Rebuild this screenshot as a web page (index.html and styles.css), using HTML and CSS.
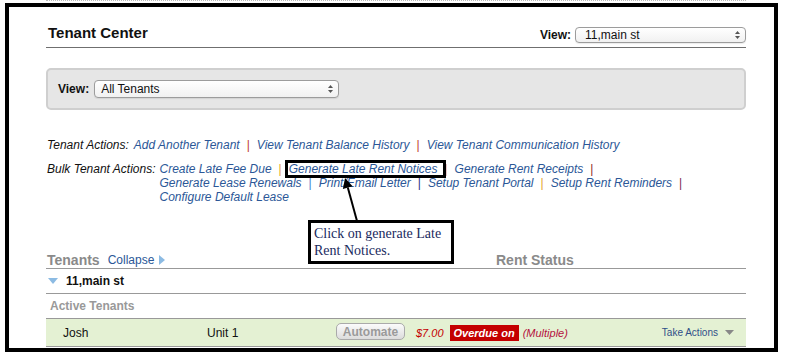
FILE: index.html
```html
<!DOCTYPE html>
<html lang="en">
  <head>
    <meta charset="UTF-8" />
    <title>Tenant Center</title>
    <link rel="stylesheet" href="styles.css">
  </head>
  <body>
    <div class="page">
      <div class="header">
        <h2>Tenant Center</h2>
        <div class="view">
          <label>View:</label>
          <div class="select top-select">
            <select><option>11,main st</option></select>
            <svg width="5" height="8" viewBox="0 0 5 8"><polygon points="0,3 2.5,0 5,3" fill="#555"/><polygon points="0,5 2.5,8 5,5" fill="#555"/></svg>
          </div>
        </div>
      </div>

      <div class="filter">
        <label>View:</label>
        <div class="select filter-select">
          <select><option>All Tenants</option></select>
          <svg width="5" height="8" viewBox="0 0 5 8"><polygon points="0,3 2.5,0 5,3" fill="#555"/><polygon points="0,5 2.5,8 5,5" fill="#555"/></svg>
        </div>
      </div>

      <div class="actions">
        <div class="action-line">
          <span>Tenant Actions:</span>
          <div>
            <a href="#">Add Another Tenant</a><span class="sep red">|</span><a href="#">View Tenant Balance History</a><span class="sep red">|</span><a href="#">View Tenant Communication History</a>
          </div>
        </div>
        <div class="action-line">
          <span>Bulk Tenant Actions:</span>
          <div>
            <a href="#">Create Late Fee Due</a><span class="sep orange">|</span><a href="#">Generate Late Rent Notices</a><span class="sep orange">|</span><a href="#">Generate Rent Receipts</a><span class="sep brown">|</span><br />
            <a href="#">Generate Lease Renewals</a><span class="sep blue">|</span><a href="#">Print/Email Letter</a><span class="sep navy">|</span><a href="#">Setup Tenant Portal</a><span class="sep orange">|</span><a href="#">Setup Rent Reminders</a><span class="sep purple">|</span><br />
            <a href="#">Configure Default Lease</a>
          </div>
        </div>
      </div>

      <div class="list-head">
        <div class="tenants-col">
          <span class="list-title">Tenants</span>
          <a href="#">Collapse</a>
          <svg width="6" height="10" viewBox="0 0 6 10"><polygon points="0,0 6,5 0,10" fill="#8cbbe3"/></svg>
        </div>
        <span class="list-title">Rent Status</span>
      </div>

      <div class="row group">
        <svg width="10" height="6" viewBox="0 0 10 6"><polygon points="0,0 10,0 5,6" fill="#8cbbe3"/></svg>
        <span>11,main st</span>
      </div>

      <div class="row subhead">Active Tenants</div>

      <div class="row tenant active">
        <span>Josh</span>
        <span>Unit 1</span>
        <span><button class="automate">Automate</button></span>
        <span class="status">
          <span class="amount">$7.00</span>
          <span class="overdue">Overdue on</span>
          <span class="multiple">(Multiple)</span>
        </span>
        <span class="take">
          <a href="#">Take Actions</a>
          <svg width="9" height="5" viewBox="0 0 9 5"><polygon points="0,0 9,0 4.5,5" fill="#888"/></svg>
        </span>
      </div>

      <div class="row tenant">
        <span>Tenant 2 Name</span>
        <span><a href="#">Add Tenant Info</a></span>
        <span></span>
        <span class="status"><a href="#">Add Lease</a></span>
        <span class="take">
          <a href="#">Take Actions</a>
          <svg width="9" height="5" viewBox="0 0 9 5"><polygon points="0,0 9,0 4.5,5" fill="#888"/></svg>
        </span>
      </div>
    </div>

    <!-- annotation drawn on top of the screenshot -->
    <div class="frame"></div>
    <div class="mark"></div>
    <svg class="arrow" width="24" height="50" viewBox="0 0 24 50">
      <line x1="9.8" y1="13.6" x2="19" y2="47" stroke="#000" stroke-width="2" />
      <polygon points="7,4 14.6,12.2 4.9,15" fill="#000" />
    </svg>
    <div class="callout">Click on generate Late<br />Rent Notices.</div>
  </body>
</html>
```

FILE: styles.css
```css
html,
body {
  margin: 0;
  height: 356px;
  overflow: hidden;
}

body {
  position: relative;
  font-family: "Liberation Sans", Arial, sans-serif;
  font-size: 12px;
  color: #222;
  background: #fff;
}

a {
  color: #2b5797;
  text-decoration: none;
}

.page {
  width: 700px;
  margin-left: 46px;
  border-top: 1px dotted #bbb;
}

.header {
  display: flex;
  justify-content: space-between;
  align-items: flex-start;
  height: 18px;
  padding: 25px 0 3px 2px;
  border-bottom: 1px solid #6f6f6f;
}

.header h2 {
  margin: 0;
  font-size: 15px;
  line-height: 14px;
  color: #111;
}

.view {
  display: flex;
  align-items: center;
  gap: 4px;
  margin-top: 1px;
}

label {
  font-weight: bold;
  color: #111;
}

.select {
  position: relative;
}

.select select {
  -webkit-appearance: none;
  appearance: none;
  width: 100%;
  height: 100%;
  margin: 0;
  padding: 0 16px 0 6px;
  font: 12px "Liberation Sans", Arial, sans-serif;
  color: #111;
  border: 1px solid #9c9c9c;
  border-radius: 4px;
  background: linear-gradient(#fff, #f1f1f1);
  box-shadow: 0 1px 1px rgba(0, 0, 0, 0.08);
}

.select svg {
  position: absolute;
  right: 6px;
  top: 50%;
  margin-top: -4px;
}

.top-select {
  width: 171px;
  height: 16px;
}

.top-select select {
  padding-left: 9px;
}

.filter {
  display: flex;
  align-items: center;
  gap: 5px;
  height: 38px;
  margin-top: 20px;
  padding: 0 10px;
  background: #e6e6e6;
  border: 2px solid #cfcfcf;
  border-radius: 5px;
}

.filter-select {
  width: 245px;
  height: 18px;
}

.actions {
  margin-top: 28px;
  font-style: italic;
  line-height: 14px;
  color: #111;
}

.action-line {
  display: flex;
  gap: 5px;
  padding-left: 1px;
}

.action-line + .action-line {
  margin-top: 10px;
  gap: 4px;
}

.sep {
  margin: 0 7px;
  font-style: normal;
}

.sep.red { color: #c0392b; }
.sep.orange { color: #e3a228; }
.sep.brown { color: #8e2b2b; }
.sep.blue { color: #3f7fd0; }
.sep.navy { color: #2e2f8a; }
.sep.purple { color: #7b1f55; }

.list-head {
  display: flex;
  align-items: center;
  height: 16px;
  margin-top: 48px;
  border-bottom: 1px solid #999;
}

.tenants-col {
  display: flex;
  align-items: center;
  width: 449px;
  padding-left: 1px;
}

.tenants-col a {
  margin-left: 8px;
}

.tenants-col svg {
  margin-left: 5px;
}

.list-title {
  font-size: 14px;
  font-weight: bold;
  color: #8a8a8a;
}

.row {
  display: flex;
  align-items: center;
  border-bottom: 1px solid #999;
}

.group {
  height: 24px;
  gap: 8px;
  padding-left: 2px;
  font-weight: bold;
  color: #111;
}

.subhead {
  height: 24px;
  padding-left: 4px;
  font-weight: bold;
  color: #999;
}

.tenant {
  display: grid;
  grid-template-columns: 144px 129px 80px 1fr auto;
  align-items: center;
  height: 27px;
  padding: 0 12px 0 17px;
  color: #111;
}

.tenant.active {
  background: #e4f1d3;
}

.automate {
  width: 69px;
  height: 17px;
  padding: 0;
  font: bold 12px "Liberation Sans", Arial, sans-serif;
  color: #9a9a9a;
  border: 1px solid #aaa;
  border-radius: 5px;
  background: linear-gradient(#fbfbfb, #dcdcdc);
  margin-top: -2px;
}

.status {
  display: flex;
  align-items: center;
  font-size: 11px;
  font-style: italic;
}

.amount {
  color: #c40000;
}

.overdue {
  margin: 0 4px 0 6px;
  padding: 1px 4px;
  line-height: 14px;
  background: #c40000;
  color: #fff;
  font-weight: bold;
}

.multiple {
  color: #b5123e;
}

.take {
  display: flex;
  align-items: center;
  gap: 7px;
  font-size: 10px;
}

.take a {
  color: #2f4f88;
}

.frame {
  position: absolute;
  left: 5px;
  top: 3px;
  width: 773px;
  height: 349px;
  box-sizing: border-box;
  border: 4px solid #000;
}

.mark {
  position: absolute;
  left: 285px;
  top: 160px;
  width: 161px;
  height: 18px;
  box-sizing: border-box;
  border: 3px solid #000;
}

.arrow {
  position: absolute;
  left: 338px;
  top: 174px;
}

.callout {
  position: absolute;
  left: 308px;
  top: 220px;
  width: 146px;
  height: 44px;
  box-sizing: border-box;
  padding: 2px 3px;
  border: 3px solid #000;
  background: #fff;
  font-family: "Liberation Serif", "Times New Roman", serif;
  font-size: 14px;
  line-height: 17px;
  color: #1a2a5e;
}
```
